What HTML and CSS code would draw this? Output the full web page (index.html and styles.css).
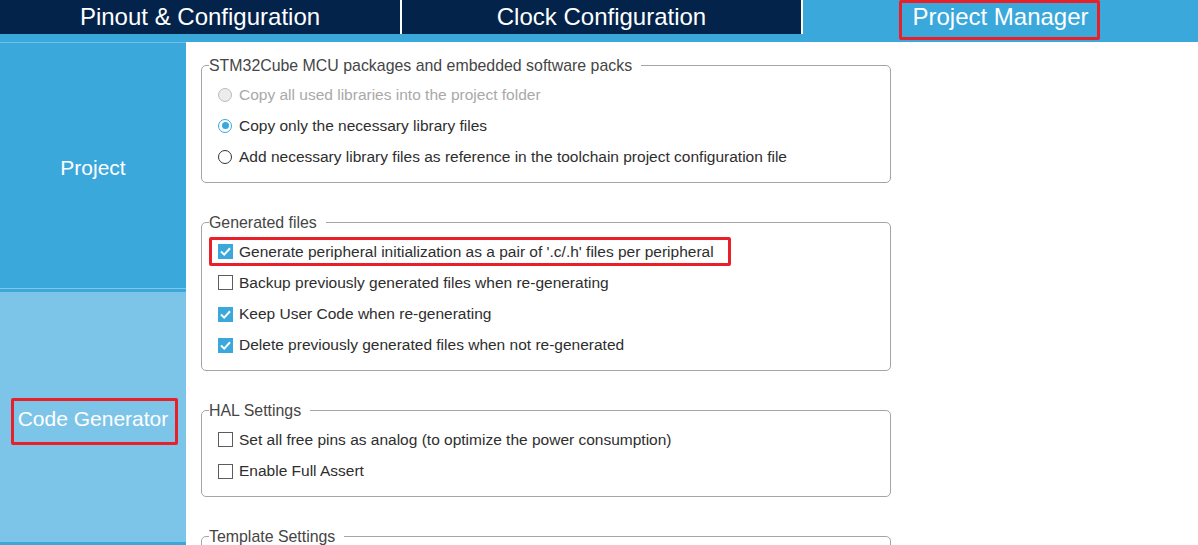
FILE: index.html
```html
<!DOCTYPE html>
<html>
<head>
<meta charset="utf-8">
<link rel="stylesheet" href="styles.css">
</head>
<body>
<div class="app">
  <header class="tabs">
    <div class="tab">Pinout &amp; Configuration</div>
    <div class="tab sep">Clock Configuration</div>
    <div class="tab sep active"><span class="marked">Project Manager</span></div>
  </header>
  <div class="strip"></div>
  <div class="main">
    <nav class="sidebar">
      <div class="nav-project">Project</div>
      <div class="nav-code">
        <div class="nav-code-body"><span class="marked-box">Code Generator</span></div>
      </div>
    </nav>
    <section class="content">
      <fieldset class="group">
        <legend>STM32Cube MCU packages and embedded software packs</legend>
        <div class="rows">
          <div class="row disabled"><span class="radio off"></span><span>Copy all used libraries into the project folder</span></div>
          <div class="row"><span class="radio on"></span><span>Copy only the necessary library files</span></div>
          <div class="row"><span class="radio"></span><span>Add necessary library files as reference in the toolchain project configuration file</span></div>
        </div>
      </fieldset>
      <fieldset class="group">
        <legend>Generated files</legend>
        <div class="rows">
          <div class="row hl"><span class="check on"><svg viewBox="0 0 15 15" width="15" height="15"><polyline points="3,7.5 6.2,10.6 12,4.3" fill="none" stroke="#fff" stroke-width="2"/></svg></span><span>Generate peripheral initialization as a pair of '.c/.h' files per peripheral</span></div>
          <div class="row"><span class="check"></span><span>Backup previously generated files when re-generating</span></div>
          <div class="row"><span class="check on"><svg viewBox="0 0 15 15" width="15" height="15"><polyline points="3,7.5 6.2,10.6 12,4.3" fill="none" stroke="#fff" stroke-width="2"/></svg></span><span>Keep User Code when re-generating</span></div>
          <div class="row"><span class="check on"><svg viewBox="0 0 15 15" width="15" height="15"><polyline points="3,7.5 6.2,10.6 12,4.3" fill="none" stroke="#fff" stroke-width="2"/></svg></span><span>Delete previously generated files when not re-generated</span></div>
        </div>
      </fieldset>
      <fieldset class="group">
        <legend>HAL Settings</legend>
        <div class="rows">
          <div class="row"><span class="check"></span><span>Set all free pins as analog (to optimize the power consumption)</span></div>
          <div class="row"><span class="check"></span><span>Enable Full Assert</span></div>
        </div>
      </fieldset>
      <fieldset class="group">
        <legend>Template Settings</legend>
        <div class="rows">
          <div class="row"><span class="check"></span><span>Template</span></div>
        </div>
      </fieldset>
    </section>
  </div>
</div>
</body>
</html>
```
FILE: styles.css
```css
* { box-sizing: border-box; }
html, body {
  margin: 0;
  padding: 0;
  width: 1198px;
  height: 545px;
  overflow: hidden;
  background: #fff;
  font-family: "Liberation Sans", Arial, sans-serif;
}
.app {
  display: flex;
  flex-direction: column;
  height: 545px;
}
.tabs {
  display: grid;
  grid-template-columns: 400px 401px 1fr;
  height: 34px;
  background: #03234b;
}
.tab {
  height: 34px;
  line-height: 34px;
  text-align: center;
  color: #fff;
  font-size: 24px;
  background: #03234b;
}
.tab.sep {
  border-left: 2px solid #fff;
}
.tab.active {
  background: #3aa8db;
}
.marked {
  position: relative;
  display: inline-block;
}
.marked::after {
  content: "";
  position: absolute;
  top: 0;
  bottom: -6px;
  left: -13px;
  right: -11px;
  border: 3px solid #e8202a;
  border-radius: 2px;
}
.strip {
  height: 8px;
  background: #3aa8db;
}
.main {
  flex: 1;
  display: flex;
  min-height: 0;
}
.sidebar {
  width: 186px;
  flex: none;
  background: #3aa8db;
  display: flex;
  flex-direction: column;
}
.nav-project {
  height: 246px;
  border-top: 1px solid #6fc1e9;
  display: flex;
  align-items: center;
  justify-content: center;
  padding-top: 5px;
  color: #fff;
  font-size: 21px;
}
.nav-code {
  border-top: 1px solid #7fc8ec;
  padding-top: 3px;
}
.nav-code-body {
  height: 250px;
  background: #7dc5e8;
  display: flex;
  align-items: center;
  justify-content: center;
  color: #fff;
  font-size: 21px;
}
.marked-box {
  display: inline-block;
  line-height: 25px;
  padding: 5px 7px 11px 4px;
  margin: 9px 0 0 3px;
  border: 3px solid #e8202a;
  border-radius: 2px;
}
.content {
  flex: 1;
  padding: 15px 0 0 15px;
}
.group {
  width: 690px;
  margin: 0 0 31px 0;
  border: 1px solid #a2a6ab;
  border-radius: 5px;
  padding: 0 0 9px 7px;
  min-inline-size: 0;
}
.group legend {
  padding: 0 9px 0 0;
  font-size: 15.9px;
  line-height: 17px;
  color: #454545;
}
.rows {
  padding-top: 5px;
}
.row {
  height: 31.3px;
  display: flex;
  align-items: center;
  padding-left: 9px;
  font-size: 15.5px;
  color: #2e2e2e;
}
.row.disabled {
  color: #a9a9a9;
}
.row.hl {
  position: relative;
  width: fit-content;
}
.row.hl::after {
  content: "";
  position: absolute;
  left: 0;
  top: 1.5px;
  bottom: 1.5px;
  right: -17px;
  border: 3px solid #e8202a;
  border-radius: 2px;
}
.radio {
  width: 14px;
  height: 14px;
  margin-right: 7px;
  border-radius: 50%;
  border: 1.5px solid #333;
  background: #fff;
  flex: none;
  display: flex;
  align-items: center;
  justify-content: center;
}
.radio.off {
  border-color: #bcbcbc;
  background: #ececec;
}
.radio.on {
  border-color: #3aa8db;
}
.radio.on::after {
  content: "";
  width: 7px;
  height: 7px;
  border-radius: 50%;
  background: #3aa8db;
}
.check {
  width: 15px;
  height: 15px;
  margin-right: 6px;
  border: 1.5px solid #5c5c5c;
  background: #fff;
  flex: none;
  display: flex;
}
.check.on {
  border: none;
  background: #3aa8db;
}
.check svg {
  display: block;
}
```
